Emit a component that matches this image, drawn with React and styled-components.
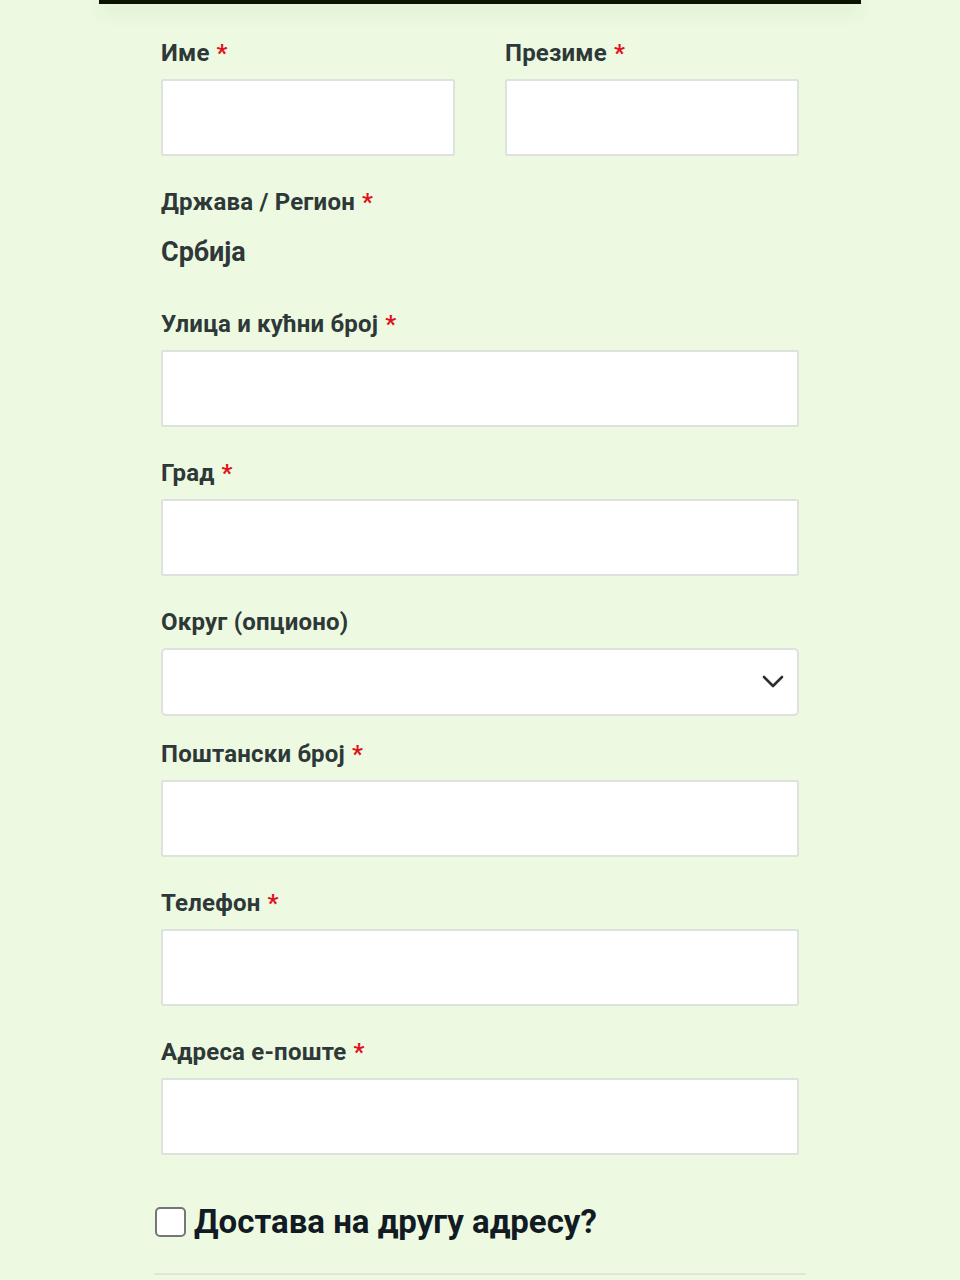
import React from "react";
import styled, { createGlobalStyle } from "styled-components";

const Global = createGlobalStyle`
  html, body { margin: 0; padding: 0; background: #edfae1; }
  body { font-family: Roboto, "Noto Sans", "Liberation Sans", sans-serif; }
  * { box-sizing: border-box; }
`;

const Page = styled.div`
  width: 960px;
  min-height: 1280px;
  background: #edfae1;
  overflow: hidden;
`;

const TopBar = styled.div`
  width: 762px;
  height: 4px;
  margin: 0 auto;
  background: #0b1300;
  box-shadow: 0 6px 18px rgba(40, 60, 30, 0.18);
`;

const Form = styled.form`
  width: 638px;
  margin: 0 auto;
  padding-top: 34px;
`;

const Row = styled.div`
  display: grid;
  grid-template-columns: 294px 294px;
  column-gap: 50px;
`;

const Field = styled.div`
  display: flex;
  flex-direction: column;
  margin-bottom: ${(p) => p.$mb ?? 31}px;
`;

const Label = styled.label`
  font-size: 24px;
  font-weight: 700;
  line-height: 31px;
  letter-spacing: 0.2px;
  color: #2e3838;
  margin-bottom: ${(p) => p.$mb ?? 10}px;
`;

const Req = styled.span`
  color: #e0121b;
  margin-left: 7px;
`;

const Value = styled.div`
  font-size: 27px;
  font-weight: 700;
  line-height: 30px;
  color: #2e3838;
`;

const Input = styled.input`
  width: 100%;
  height: 77px;
  border: 2px solid #dde2dc;
  border-radius: 2px;
  background: #fff;
  font-size: 20px;
  padding: 0 20px;
  outline: none;
`;

const SelectWrap = styled.div`
  position: relative;
  height: 68px;
  border: 2px solid #dde2dc;
  border-radius: 5px;
  background: #fff;
`;

const Chevron = styled.svg`
  position: absolute;
  right: 13px;
  top: 25px;
`;

const ShipRow = styled.div`
  width: 652px;
  margin: 47px auto 0;
  padding-bottom: 31px;
  border-bottom: 2px solid #dfe6dc;
  display: flex;
  align-items: center;
  gap: 8px;
  padding-left: 1px;
`;

const Check = styled.span`
  width: 31px;
  height: 30px;
  border: 2px solid #767676;
  border-radius: 5px;
  background: #fff;
  flex: none;
`;

const ShipText = styled.h3`
  margin: 0;
  font-size: 33px;
  line-height: 40px;
  font-weight: 700;
  color: #121a24;
`;

function Req2() {
  return <Req>*</Req>;
}

export default function App() {
  return (
    <Page>
      <Global />
      <TopBar />
      <Form>
        <Row>
          <Field>
            <Label>Име<Req2 /></Label>
            <Input />
          </Field>
          <Field>
            <Label>Презиме<Req2 /></Label>
            <Input />
          </Field>
        </Row>
        <Field $mb={42}>
          <Label $mb={19}>Држава / Регион<Req2 /></Label>
          <Value>Србија</Value>
        </Field>
        <Field>
          <Label>Улица и кућни број<Req2 /></Label>
          <Input />
        </Field>
        <Field>
          <Label>Град<Req2 /></Label>
          <Input />
        </Field>
        <Field $mb={23}>
          <Label>Округ (опционо)</Label>
          <SelectWrap>
            <Chevron width="22" height="14" viewBox="0 0 22 14">
              <polyline points="2,2 11,11 20,2" fill="none" stroke="#2b2f2f" strokeWidth="2.6" strokeLinecap="round" strokeLinejoin="round" />
            </Chevron>
          </SelectWrap>
        </Field>
        <Field>
          <Label>Поштански број<Req2 /></Label>
          <Input />
        </Field>
        <Field>
          <Label>Телефон<Req2 /></Label>
          <Input />
        </Field>
        <Field $mb={0}>
          <Label>Адреса е-поште<Req2 /></Label>
          <Input />
        </Field>
      </Form>
      <ShipRow>
        <Check />
        <ShipText>Достава на другу адресу?</ShipText>
      </ShipRow>
    </Page>
  );
}
